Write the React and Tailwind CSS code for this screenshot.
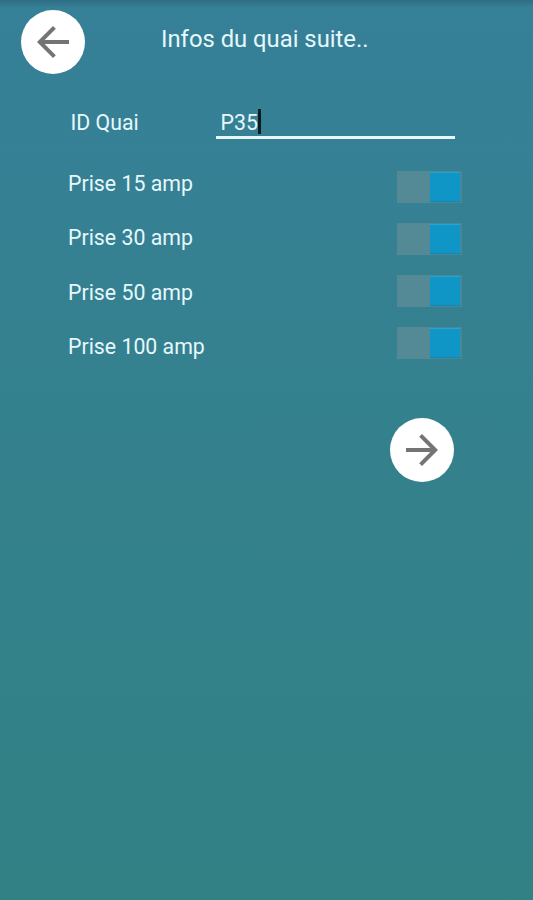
import React, { useState } from 'react';
import { MdArrowBack, MdArrowForward } from 'react-icons/md';

const PRISES = ['15', '30', '50', '100'];

const RoundButton = ({ label, children }) => (
  <button
    aria-label={label}
    className="w-16 h-16 rounded-full bg-white text-[#747474] flex items-center justify-center"
  >
    {children}
  </button>
);

const Switch = ({ label, checked, onChange }) => (
  <button
    role="switch"
    aria-label={label}
    aria-checked={checked}
    onClick={onChange}
    className={`w-[65px] h-8 pl-px pr-[2px] flex items-center bg-linear-to-r from-[#538a96] from-50% to-[#45889a] to-55% ${checked ? 'justify-end' : 'justify-start'}`}
  >
    <span className="w-[30px] h-[30px] bg-[#0f96c6] border-t border-b border-t-[#2ba3cb] border-b-[#1387b0]" />
  </button>
);

const App = () => {
  const [actives, setActives] = useState(PRISES);

  const toggle = (amp) => {
    setActives((prev) => (prev.includes(amp) ? prev.filter((a) => a !== amp) : [...prev, amp]));
  };

  return (
    <div className="w-[533px] h-[900px] overflow-hidden bg-linear-to-b from-[#368098] via-[#34818d] to-[#328185] font-[Roboto,sans-serif] text-[21.3px] text-[#e6f8fc]">
      {/* Status bar shadow */}
      <div className="h-2 bg-linear-to-b from-[#2e6e83] to-transparent" />

      {/* Header */}
      <header className="flex items-start pl-[21px] pt-[2px]">
        <RoundButton label="Retour">
          <MdArrowBack size={48} />
        </RoundButton>
        <h1 className="ml-[76px] mt-[13px] text-[23.8px] leading-8">Infos du quai suite..</h1>
      </header>

      {/* ID Quai */}
      <div className="flex items-start pl-[70.5px] mt-[32px]">
        <label className="w-[145.5px] pt-[3px] leading-7">ID Quai</label>
        <div className="w-[239px] h-[33px] pl-[4.5px] pt-[3px] border-b-[3px] border-[#e6f8fc] flex items-start">
          <span className="w-[37.5px] leading-7">P35</span>
          <span className="w-[3px] h-[25px] bg-[#0b1a1f]" />
        </div>
      </div>

      {/* Prises */}
      <div className="flex justify-between pl-[68px] pr-[71px] mt-[17px]">
        <ul className="pt-px">
          {PRISES.map((amp) => (
            <li key={amp} className="h-[54.3px] flex items-center">Prise {amp} amp</li>
          ))}
        </ul>
        <div className="flex flex-col gap-5 pt-[15px]">
          {PRISES.map((amp) => (
            <Switch
              key={amp}
              label={`Prise ${amp} amp`}
              checked={actives.includes(amp)}
              onChange={() => toggle(amp)}
            />
          ))}
        </div>
      </div>

      <div className="flex justify-end pr-[79px] mt-[44px]">
        <RoundButton label="Suivant">
          <MdArrowForward size={48} />
        </RoundButton>
      </div>
    </div>
  );
};

export default App;
